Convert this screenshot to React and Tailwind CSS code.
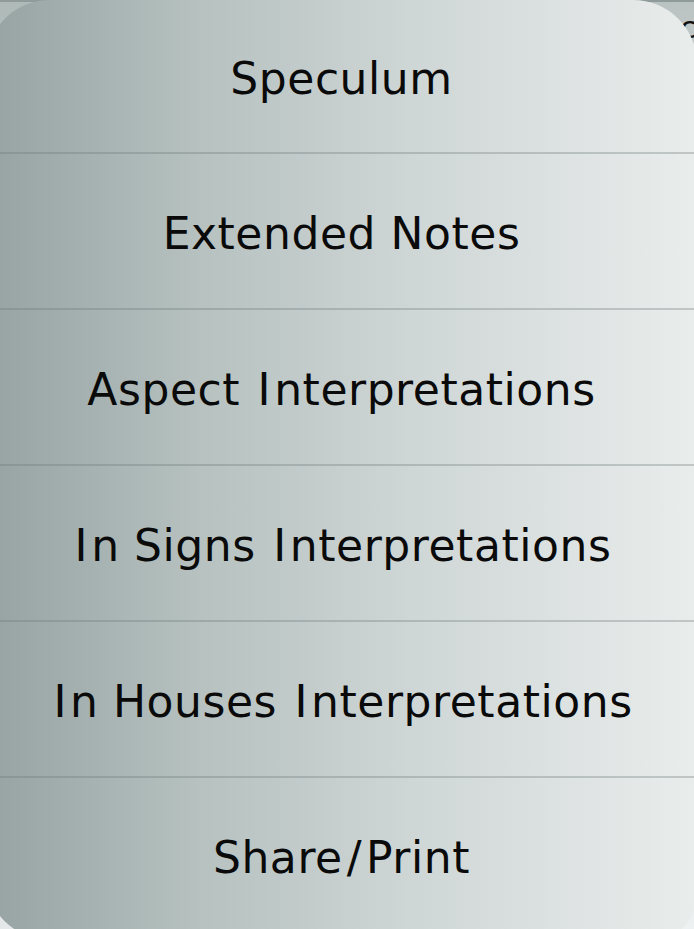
const items = [
  "Speculum",
  "Extended Notes",
  "Aspect Interpretations",
  "In Signs Interpretations",
  "In Houses Interpretations",
  "Share/Print",
];

function Label({ text }) {
  return (
    <span>
      {text.split(/(I|\/)/).map((part, j) =>
        part === "I" ? (
          <span key={j} className="mx-[3px]">I</span>
        ) : part === "/" ? (
          <span key={j} className="mx-[4px]">/</span>
        ) : (
          <span key={j}>{part}</span>
        )
      )}
    </span>
  );
}

export default function App() {
  return (
    <div className="relative w-[694px] h-[929px] overflow-hidden bg-[linear-gradient(170deg,#aeb9b8_0%,#d3d8d8_35%,#d6dbdb_70%,#eef1f1_100%)]">
      <div className="absolute left-0 top-0 w-full h-[2px] bg-[#8e9b9a]" />
      <span
        className="absolute left-[680px] top-[13px] text-[30px] leading-none text-[#111]"
        style={{ fontFamily: '"DejaVu Sans", sans-serif' }}
      >
        c
      </span>
      <div
        className="relative ml-[-14px] w-[711px] h-[940px] rounded-tl-[64px] rounded-tr-[64px] rounded-br-[45px] rounded-bl-[64px] overflow-hidden bg-[linear-gradient(90deg,#96a3a2_0%,#b6c1c0_30%,#cfd6d6_60%,#e9edec_100%)] flex flex-col"
        style={{ fontFamily: '"DejaVu Sans", "Verdana", sans-serif' }}
      >
        {items.map((t, i) => (
          <div
            key={t}
            className={
              (i === 0 ? "h-[152px] " : "h-[156px] border-t-2 border-[rgba(105,118,117,0.32)] ") +
              "flex items-center justify-center pt-[6px] text-[44px] text-[#0a0a0a] tracking-[0.55px]"
            }
          >
            <Label text={t} />
          </div>
        ))}
      </div>
    </div>
  );
}
